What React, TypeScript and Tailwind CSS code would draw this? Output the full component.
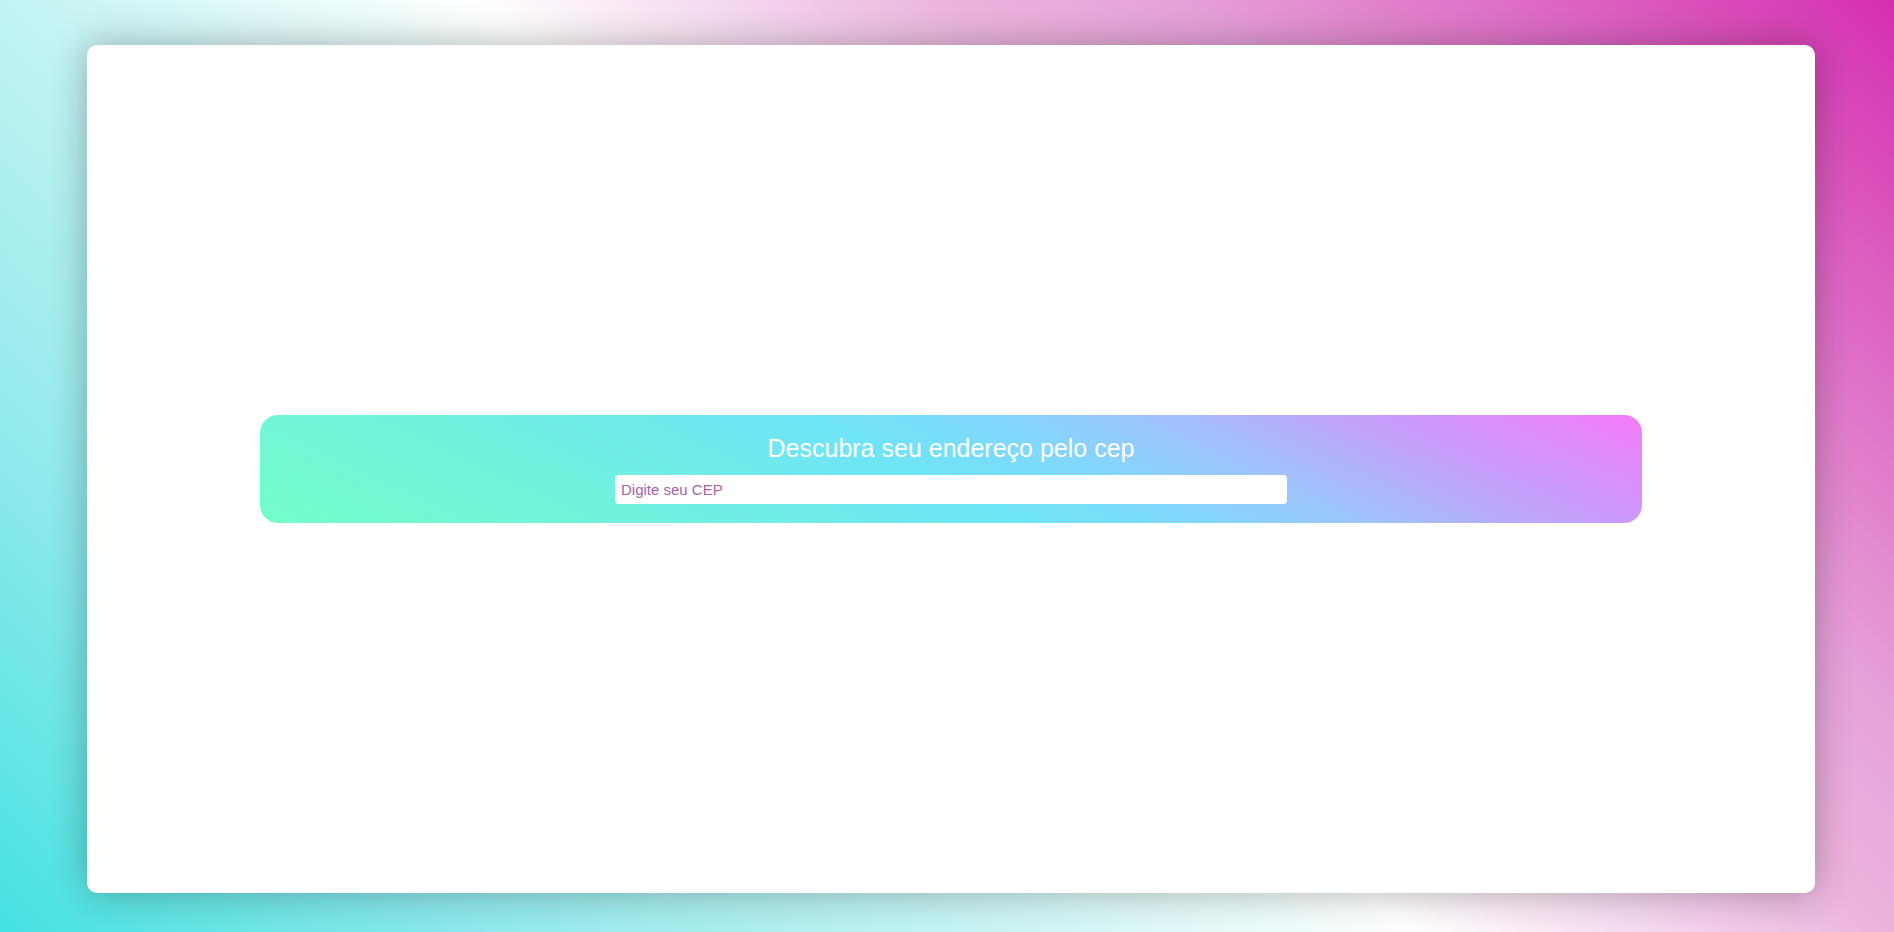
export default function App() {
  return (
    <div
      className="h-screen w-full pl-[87px] pr-[79px] pt-[45px] pb-[39px] flex"
      style={{
        background:
          'linear-gradient(45deg, #46e2e2 0%, #8fe9ec 17%, #c2f3f3 33%, #ffffff 50%, #ecb6e0 66%, #e6a0d8 75%, #df6fc7 86%, #d52fb0 100%)',
        fontFamily: '"Liberation Sans", Arial, sans-serif',
      }}
    >
      <div className="flex-1 bg-white rounded-[10px] shadow-[0_0_38px_rgba(0,0,0,0.3)] flex items-center justify-center">
        <div className="w-[80%] rounded-[18px] bg-[linear-gradient(25deg,#74fdca_0%,#72f2dc_22%,#6fe4f7_48%,#80d8fb_58%,#9cc5fb_68%,#c99cfc_84%,#e08af9_93%,#f679f8_100%)] flex flex-col items-center pt-[19px] pb-[19px] gap-[13px]">
          <h1 className="text-white text-[25px] font-normal leading-[28px]">
            Descubra seu endereço pelo cep
          </h1>
          <input
            type="text"
            placeholder="Digite seu CEP"
            className="w-[672px] h-[29px] bg-white rounded-[4px] px-[6px] text-[15px] text-[#8a3f82] placeholder:text-[#a563a6] outline-none"
          />
        </div>
      </div>
    </div>
  );
}
